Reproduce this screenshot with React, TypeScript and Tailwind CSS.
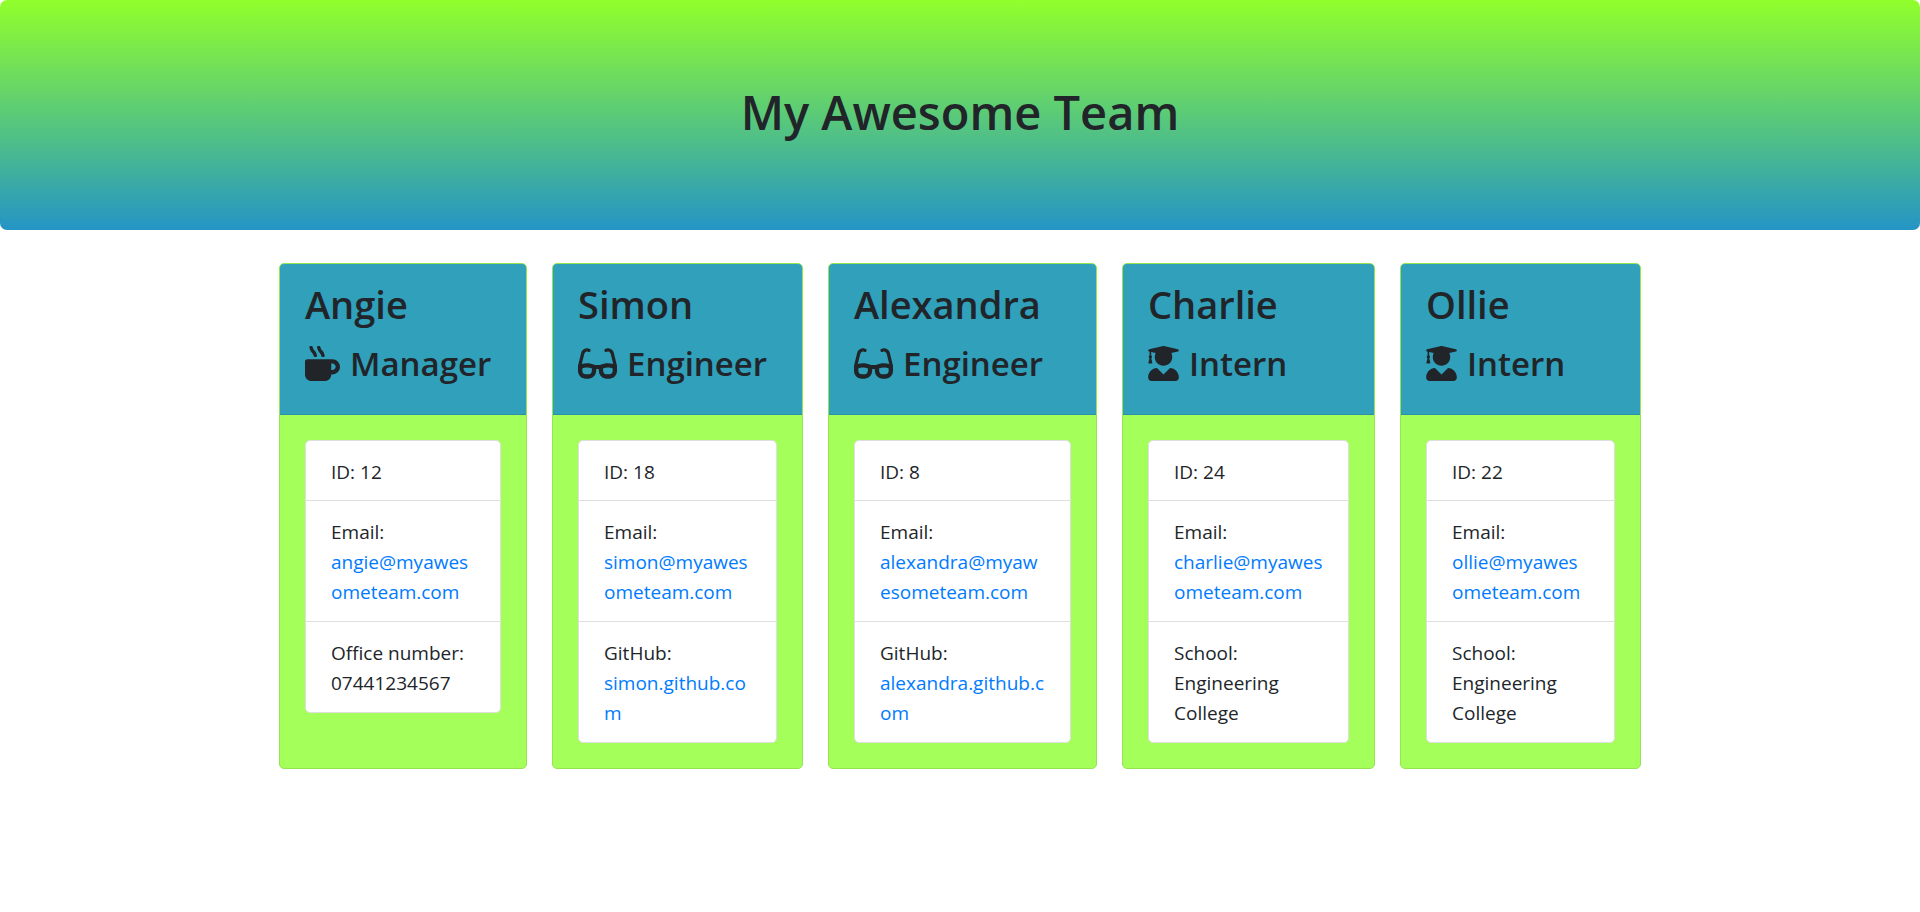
import type { ReactNode } from "react";
import { FaGlasses, FaMugHot, FaUserGraduate } from "react-icons/fa";
import type { IconType } from "react-icons";

type Role = "Manager" | "Engineer" | "Intern";

type Member = {
  name: string;
  role: Role;
  id: number;
  email: string;
  label: string;
  detail: string;
  href?: string;
};

const icons: Record<Role, { Icon: IconType; width: string }> = {
  Manager: { Icon: FaMugHot, width: "w-[35px]" },
  Engineer: { Icon: FaGlasses, width: "w-[39px]" },
  Intern: { Icon: FaUserGraduate, width: "w-[31px]" },
};

const team: Member[] = [
  { name: "Angie", role: "Manager", id: 12, email: "angie@myawesometeam.com", label: "Office number:", detail: "07441234567" },
  { name: "Simon", role: "Engineer", id: 18, email: "simon@myawesometeam.com", label: "GitHub:", detail: "simon.github.com", href: "https://simon.github.com" },
  { name: "Alexandra", role: "Engineer", id: 8, email: "alexandra@myawesometeam.com", label: "GitHub:", detail: "alexandra.github.com", href: "https://alexandra.github.com" },
  { name: "Charlie", role: "Intern", id: 24, email: "charlie@myawesometeam.com", label: "School:", detail: "Engineering College" },
  { name: "Ollie", role: "Intern", id: 22, email: "ollie@myawesometeam.com", label: "School:", detail: "Engineering College" },
];

function TextLink({ href, children }: { href: string; children: ReactNode }) {
  return (
    <a href={href} className="text-[#007bff] hover:underline">
      {children}
    </a>
  );
}

function MemberCard({ member }: { member: Member }) {
  const { Icon, width } = icons[member.role];
  return (
    <article className="flex min-w-0 flex-col rounded-[5px] border border-[#94e551] bg-[#a5ff5a]">
      <header className="rounded-t-[4px] border-b border-[#2b90a8] bg-[#30a0bb] px-[25px] pt-4 pb-[26px]">
        <h2 className="text-[38px] leading-[48px] font-semibold">{member.name}</h2>
        <h3 className="mt-3 flex items-center gap-[10px] text-[33px] leading-[48px] font-semibold">
          <Icon className={`mb-0.5 h-[35px] shrink-0 ${width}`} aria-hidden="true" />
          {member.role}
        </h3>
      </header>
      <div className="p-[25px]">
        <ul className="divide-y divide-[#dfdfdf] rounded-[5px] border border-[#dfdfdf] bg-white wrap-break-word">
          <li className="px-[25px] pt-4 pb-[13px]">ID: {member.id}</li>
          <li className="px-[25px] pt-4 pb-[14px]">
            Email: <TextLink href={`mailto:${member.email}`}>{member.email}</TextLink>
          </li>
          <li className="px-[25px] pt-4 pb-[14px]">
            {member.label}{" "}
            {member.href ? <TextLink href={member.href}>{member.detail}</TextLink> : member.detail}
          </li>
        </ul>
      </div>
    </article>
  );
}

export default function App() {
  return (
    <div className="min-h-screen bg-white font-['Open_Sans','Noto_Sans',sans-serif] text-[19px] leading-[30px] text-[#212529]">
      <div className="rounded-[7px] bg-linear-to-b/srgb from-[#91ff2b] to-[#2495c5] px-10 py-20 text-center">
        <h1 className="mb-1.5 text-[47px] leading-16 font-semibold">My Awesome Team</h1>
      </div>
      <main className="mx-auto mt-[33px] grid max-w-[1362px] grid-cols-[248fr_251fr_269fr_253fr_241fr] gap-[25px]">
        {team.map((member) => (
          <MemberCard key={member.name} member={member} />
        ))}
      </main>
    </div>
  );
}
